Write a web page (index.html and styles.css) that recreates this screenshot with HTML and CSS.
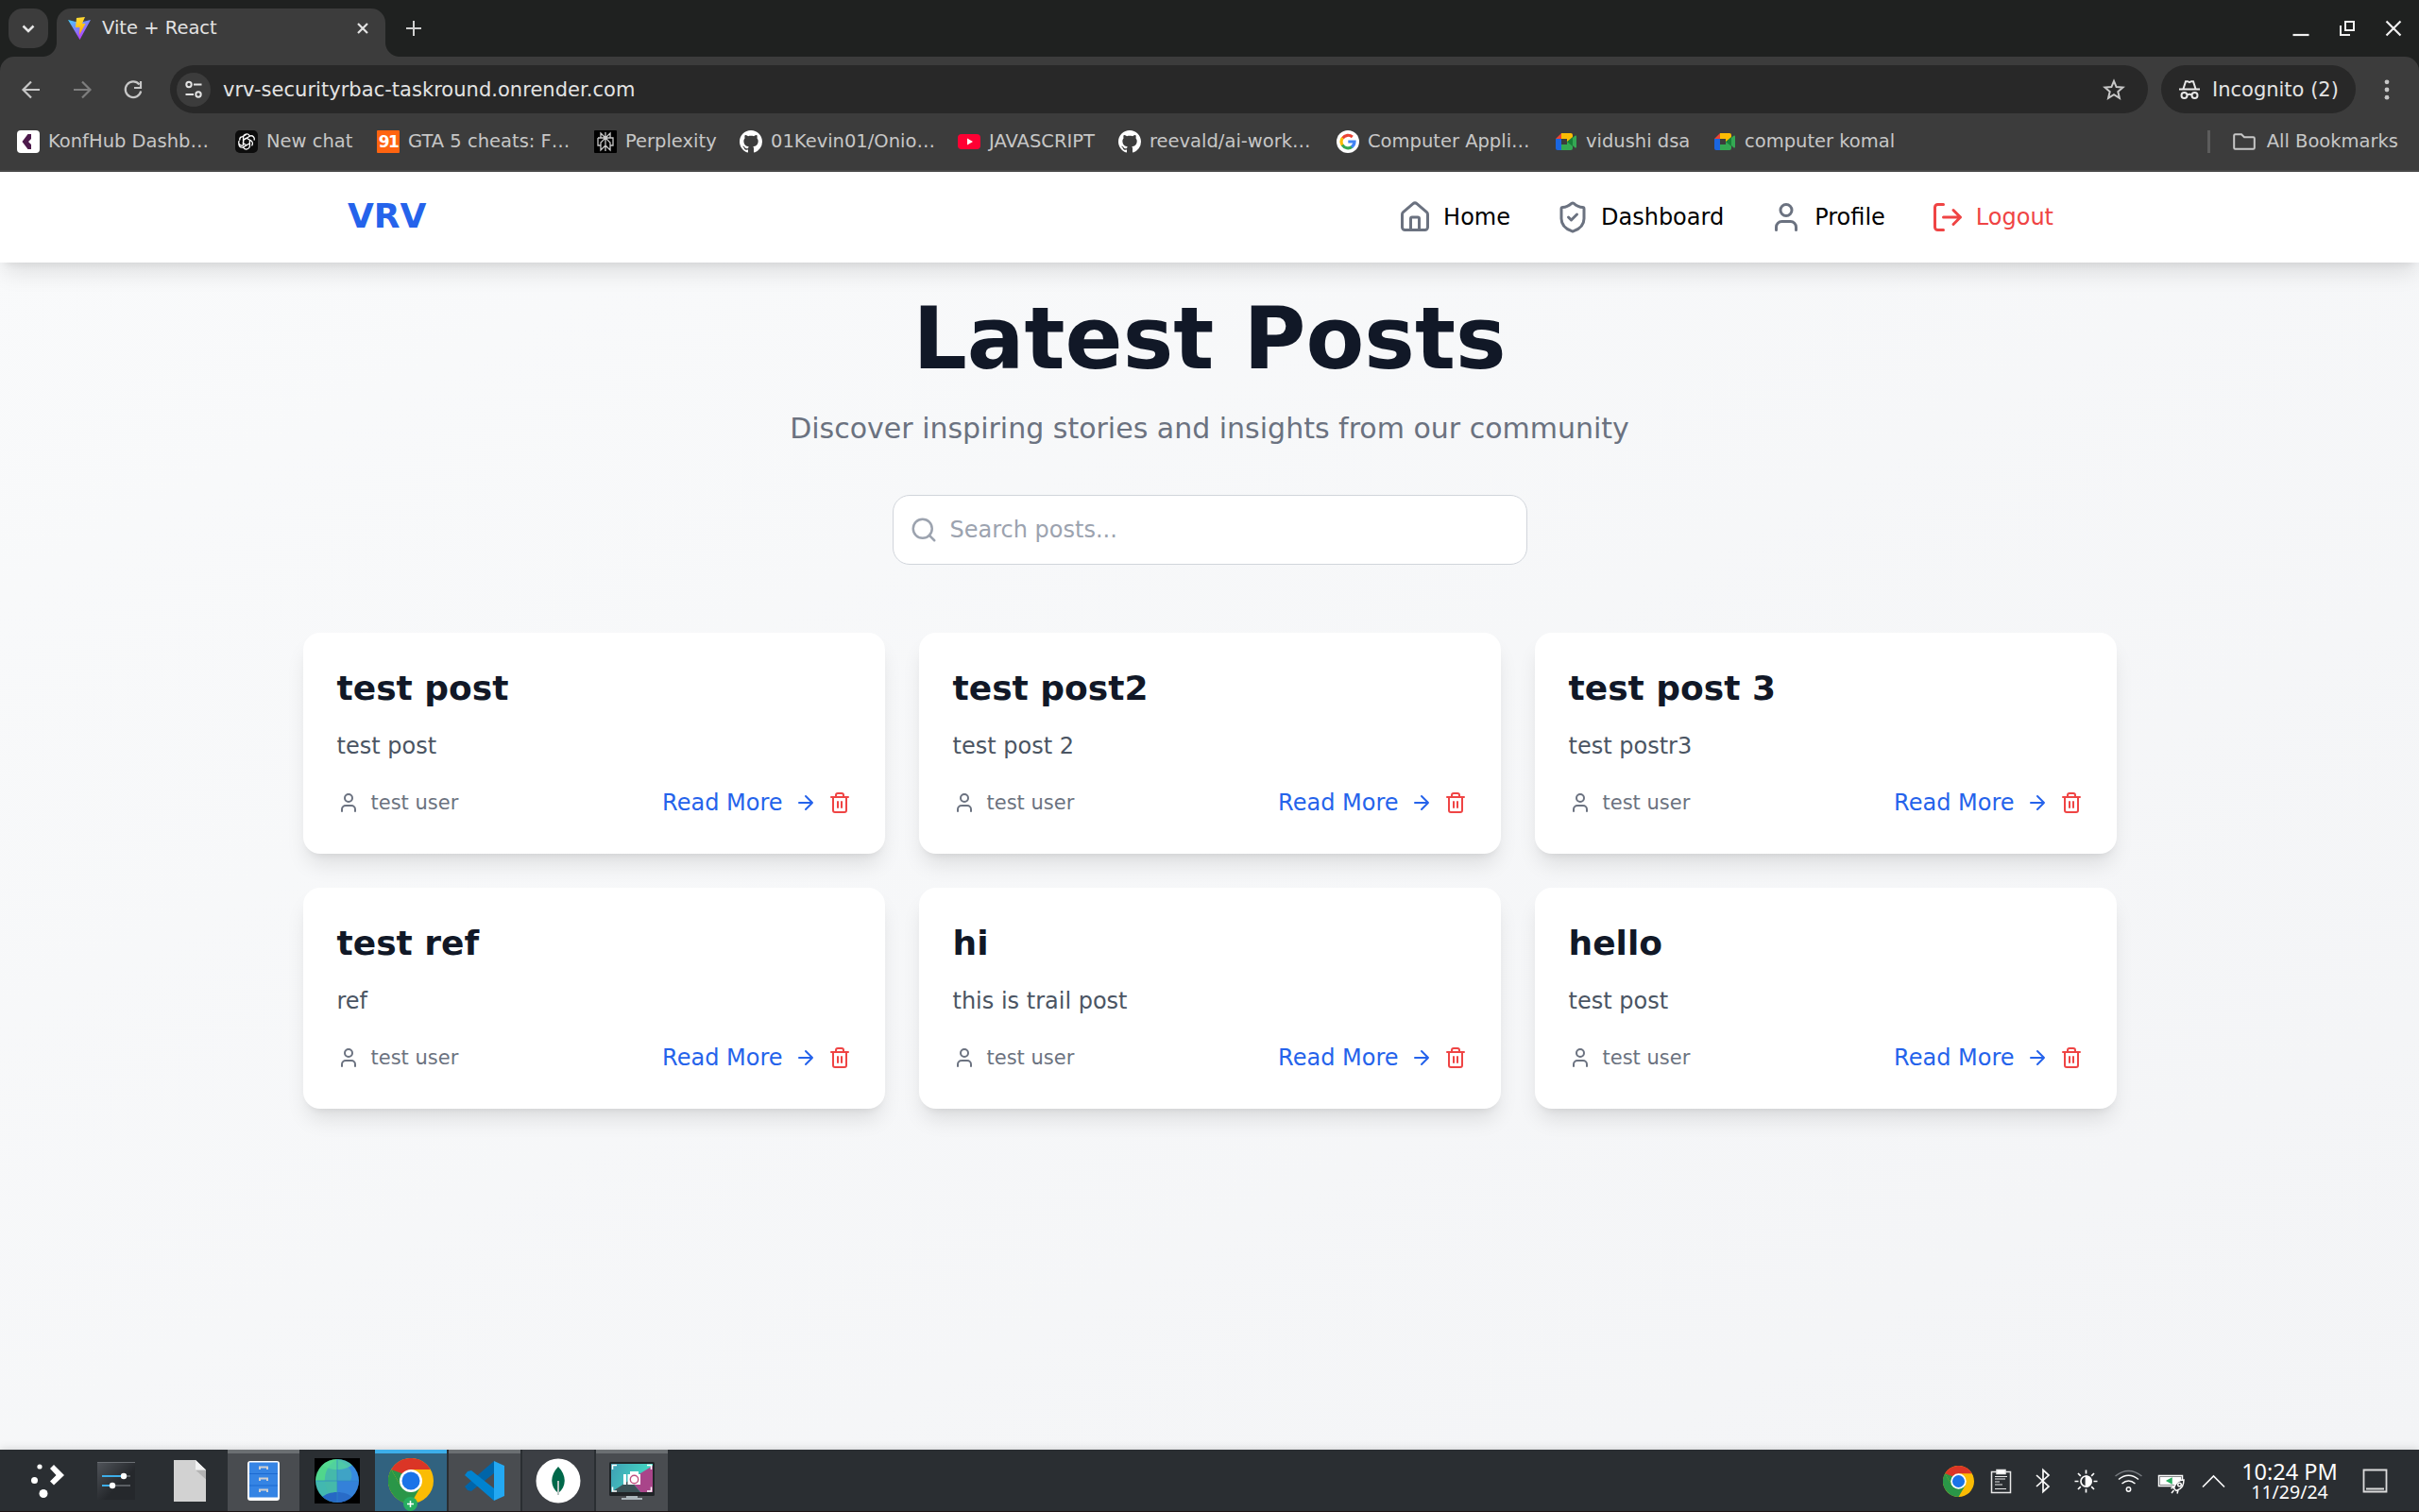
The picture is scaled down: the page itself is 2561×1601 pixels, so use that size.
FILE: index.html
```html
<!DOCTYPE html>
<html lang="en">
<head>
<meta charset="utf-8">
<title>Vite + React</title>
<link rel="stylesheet" href="styles.css">
</head>
<body>
<svg class="defs" width="0" height="0" aria-hidden="true">
  <defs>
    <linearGradient id="vite-a" x1="0" y1="0" x2=".6" y2="1"><stop offset="0" stop-color="#41d1ff"/><stop offset="1" stop-color="#bd34fe"/></linearGradient>
    <linearGradient id="vite-b" x1=".4" y1="0" x2=".6" y2="1"><stop offset="0" stop-color="#ffdd35"/><stop offset="1" stop-color="#ffa800"/></linearGradient>
    <clipPath id="globe-c"><circle cx="24" cy="24" r="23"/></clipPath>
    <linearGradient id="shot-g" x1="0" y1="0" x2="1" y2=".3"><stop offset="0" stop-color="#3f9fb5"/><stop offset="1" stop-color="#43dcc3"/></linearGradient>
    <linearGradient id="set-g" x1="0" y1="0" x2="1" y2="1"><stop offset="0" stop-color="#50545a"/><stop offset=".6" stop-color="#25282c"/></linearGradient>
  </defs>
  <symbol id="user" viewBox="0 0 24 24"><path d="M19 21v-2a4 4 0 0 0-4-4H9a4 4 0 0 0-4 4v2"/><circle cx="12" cy="7" r="4"/></symbol>
  <symbol id="arrow" viewBox="0 0 24 24"><path d="M5 12h14M12 5l7 7-7 7"/></symbol>
  <symbol id="trash" viewBox="0 0 24 24"><path d="M3 6h18M19 6v14c0 1-1 2-2 2H7c-1 0-2-1-2-2V6M8 6V4c0-1 1-2 2-2h4c1 0 2 1 2 2v2M10 11v6M14 11v6"/></symbol>
  <symbol id="github" viewBox="0 0 16 16"><path fill="#fff" d="M8 0C3.58 0 0 3.58 0 8c0 3.54 2.29 6.53 5.47 7.59.4.07.55-.17.55-.38 0-.19-.01-.82-.01-1.49-2.01.37-2.53-.49-2.69-.94-.09-.23-.48-.94-.82-1.13-.28-.15-.68-.52-.01-.53.63-.01 1.08.58 1.23.82.72 1.21 1.87.87 2.33.66.07-.52.28-.87.51-1.07-1.78-.2-3.64-.89-3.64-3.95 0-.87.31-1.59.82-2.15-.08-.2-.36-1.02.08-2.12 0 0 .67-.21 2.2.82.64-.18 1.32-.27 2-.27s1.36.09 2 .27c1.53-1.04 2.2-.82 2.2-.82.44 1.1.16 1.92.08 2.12.51.56.82 1.27.82 2.15 0 3.07-1.87 3.75-3.65 3.95.29.25.54.73.54 1.48 0 1.07-.01 1.93-.01 2.2 0 .21.15.46.55.38A8.01 8.01 0 0 0 16 8c0-4.42-3.58-8-8-8z"/></symbol>
  <symbol id="meet" viewBox="0 0 24 24"><path fill="#ea4335" d="M1 9l6-6v6z"/><path fill="#1a66e0" d="M1 9h6v12H3a2 2 0 0 1-2-2z"/><path fill="#fbbc04" d="M7 3h10a2 2 0 0 1 2 2v7h-6V9H7z"/><path fill="#34a853" d="M7 21v-6h6v-3h6v7a2 2 0 0 1-2 2z"/><path fill="#34a853" d="M15 12l6-6c1-1 2-.6 2 .5v11c0 1.100-1 1.500-2 .5z"/><path fill="#188038" d="M13 12l6-5v10z"/></symbol>
  <symbol id="chrome" viewBox="0 0 48 48"><circle cx="24" cy="24" r="24" fill="#fbbc04"/><path fill="#2a9648" d="M3.200 12A24 24 0 0 0 24 48L34.400 30 24 24 13.600 30z"/><path fill="#db3526" d="M3.200 12A24 24 0 0 1 44.800 12H24L13.600 18z"/><path fill="#2a9648" d="M3.200 12L13.600 30l6-12z"/><path fill="#db3526" d="M3.200 12L13.600 30A12 12 0 0 1 24 12z" opacity="0"/><circle cx="24" cy="24" r="12" fill="#fff"/><circle cx="24" cy="24" r="9.500" fill="#1a73e8"/></symbol>
</svg>

<header class="browser">
  <div class="tabstrip">
    <button class="tab-search"><svg width="14" height="9" viewBox="0 0 14 9"><path d="M1.500 1.500L7 7l5.500-5.500" fill="none" stroke="#e6e6e6" stroke-width="2.500"/></svg></button>
    <div class="tab">
      <svg width="24" height="24" viewBox="0 0 24 24"><path fill="url(#vite-a)" d="M0 3l12 3L24 3 12.500 24z"/><path fill="url(#vite-b)" d="M9 1l9-1-3 7h3.500L12 19l.5-8H8z"/></svg>
      <span>Vite + React</span>
      <svg class="close" width="12" height="12" viewBox="0 0 12 12"><path d="M1 1l10 10M11 1L1 11" stroke="#e3e3e3" stroke-width="2.200"/></svg>
    </div>
    <svg class="newtab" width="16" height="16" viewBox="0 0 16 16"><path d="M8 0v16M0 8h16" stroke="#d0d0d0" stroke-width="2"/></svg>
    <div class="window-controls">
      <svg width="18" height="18" viewBox="0 0 18 18"><path d="M.5 16h17" stroke="#f0f0f0" stroke-width="2.200"/></svg>
      <svg width="18" height="18" viewBox="0 0 18 18"><path d="M7 2h9v9H7zM2 6v10h10" fill="none" stroke="#f0f0f0" stroke-width="2"/></svg>
      <svg width="18" height="18" viewBox="0 0 18 18"><path d="M1.500 1.500l15 15M16.500 1.500l-15 15" stroke="#f0f0f0" stroke-width="2.200"/></svg>
    </div>
  </div>
  <div class="toolbar">
    <svg class="nav-btn" width="24" height="24" viewBox="0 0 24 24" fill="none" stroke="#c7c7c7" stroke-width="2.200"><path d="M21 12H4M12 3.500L3.500 12l8.500 8.500"/></svg>
    <svg class="nav-btn" width="24" height="24" viewBox="0 0 24 24" fill="none" stroke="#7e7e7e" stroke-width="2.200"><path d="M3 12h17M12 3.500l8.500 8.500-8.500 8.500"/></svg>
    <svg class="nav-btn" width="24" height="24" viewBox="0 0 24 24" fill="none" stroke="#c7c7c7" stroke-width="2.200"><path d="M18.500 6.500A8.300 8.300 0 1 0 20.200 13.500M20 3v7h-7"/></svg>
    <div class="omnibox">
      <span class="site"><svg width="20" height="20" viewBox="0 0 20 20" fill="none" stroke="#e3e3e3" stroke-width="2"><circle cx="5" cy="4.500" r="2.700"/><path d="M10 4.500h8.500M1.500 15h8.500"/><circle cx="15" cy="15" r="2.700"/></svg></span>
      <span class="url">vrv-securityrbac-taskround.onrender.com</span>
      <svg width="24" height="24" viewBox="0 0 24 24"><path d="M12 2.800l2.600 6.300 6.900.5-5.200 4.500 1.600 6.700L12 17.200l-5.900 3.600 1.600-6.700-5.200-4.500 6.900-.5z" fill="none" stroke="#c7c7c7" stroke-width="2"/></svg>
    </div>
    <div class="incognito">
      <svg width="22" height="22" viewBox="0 0 22 22" fill="none" stroke="#e8e8e8" stroke-width="2"><path d="M0 10.500h22M4.500 10L7 2.200h2l2 1 2-1h2l2.500 7.800"/><circle cx="5.500" cy="17" r="3"/><circle cx="16.500" cy="17" r="3"/><path d="M8.500 16.500q2.500-1.500 5 0"/></svg>
      <span>Incognito (2)</span>
    </div>
    <svg class="dots" width="6" height="24" viewBox="0 0 6 24" fill="#c7c7c7"><circle cx="3" cy="3.800" r="2.400"/><circle cx="3" cy="12" r="2.400"/><circle cx="3" cy="20.200" r="2.400"/></svg>
  </div>
  <div class="bookmarks">
    <a><svg viewBox="0 0 24 24"><rect width="24" height="24" rx="4" fill="#fff"/><path d="M11.500 4h3.500v5l-3 3 3 3v5h-3.500L5.500 12z" fill="#4d1a4b"/></svg><span>KonfHub Dashb…</span></a>
    <a><svg viewBox="0 0 24 24"><rect width="24" height="24" rx="5" fill="#0d0d0d"/><g fill="none" stroke="#fff" stroke-width="1.300"><path d="M12 8.200L8.600 10.200v5.500a3.300 3.300 0 0 1-4.300-4.700"/><path d="M8.600 12V7.200a3.600 3.600 0 0 1 6.600-1.600M8.600 10.200l3.400-2 4.300 2.500a3.600 3.600 0 0 1 1.200 5.600M12 8.200l4-2.300a3.400 3.400 0 0 1 4 4.600M15.400 10.200v6.700a3.600 3.600 0 0 1-6.600 1.500M15.400 13.800L12 15.800l-4.300-2.500M12 15.800l-4 2.300a3.400 3.400 0 0 1-4-4M12 4.300L7.800 6.600a3.600 3.600 0 0 0-3 4"/></g></svg><span>New chat</span></a>
    <a><b class="fav91">91</b><span>GTA 5 cheats: F…</span></a>
    <a><svg viewBox="0 0 24 24"><rect width="24" height="24" rx="1" fill="#000"/><path d="M12 2v20M7 3l5 5 5-5v5H7zM4 8h16v8h-3M4 8v8h3M12 8l-5 5v8l5-5 5 5v-8z" fill="none" stroke="#c8c8c8" stroke-width="1.300"/></svg><span>Perplexity</span></a>
    <a><svg viewBox="0 0 24 24"><use href="#github" width="24" height="24"/></svg><span>01Kevin01/Onio…</span></a>
    <a><svg viewBox="0 0 24 24"><rect y="4" width="24" height="16" rx="4" fill="#ff0033"/><path d="M10 8.500v7l6-3.500z" fill="#fff"/></svg><span>JAVASCRIPT</span></a>
    <a><svg viewBox="0 0 24 24"><use href="#github" width="24" height="24"/></svg><span>reevald/ai-work…</span></a>
    <a><svg viewBox="0 0 24 24"><circle cx="12" cy="12" r="12" fill="#fff"/><g fill="none" stroke-width="3.200"><path d="M6.400 8.300A7 7 0 0 1 16.800 7" stroke="#ea4335"/><path d="M6.400 8A7 7 0 0 0 6.400 16" stroke="#fbbc04"/><path d="M6.200 15.500A7 7 0 0 0 16.500 17.300" stroke="#34a853"/><path d="M16 17.700A7 7 0 0 0 19 12H12.300" stroke="#4285f4"/></g></svg><span>Computer Appli…</span></a>
    <a><svg viewBox="0 0 24 24"><use href="#meet" width="24" height="24"/></svg><span>vidushi dsa</span></a>
    <a><svg viewBox="0 0 24 24"><use href="#meet" width="24" height="24"/></svg><span>computer komal</span></a>
    <a class="all"><svg viewBox="0 0 24 24"><path d="M1.200 5.500v13q0 1.300 1.300 1.300h19q1.300 0 1.300-1.300V8.500q0-1.300-1.300-1.300H12L9 4.200H2.500q-1.300 0-1.300 1.300z" fill="none" stroke="#c7c7c7" stroke-width="2"/></svg><span>All Bookmarks</span></a>
  </div>
</header>

<div class="page">
  <nav class="navbar">
    <a class="brand">VRV</a>
    <div class="links">
      <a><svg viewBox="0 0 24 24"><path d="M15 21v-8a1 1 0 0 0-1-1h-4a1 1 0 0 0-1 1v8"/><path d="M3 10a2 2 0 0 1 .709-1.528l7-5.999a2 2 0 0 1 2.582 0l7 5.999A2 2 0 0 1 21 10v9a2 2 0 0 1-2 2H5a2 2 0 0 1-2-2z"/></svg>Home</a>
      <a><svg viewBox="0 0 24 24"><path d="M20 13c0 5-3.500 7.500-7.660 8.950a1 1 0 0 1-.67-.01C7.500 20.500 4 18 4 13V6a1 1 0 0 1 1-1c2 0 4.500-1.200 6.240-2.720a1.170 1.170 0 0 1 1.520 0C14.510 3.810 17 5 19 5a1 1 0 0 1 1 1z"/><path d="m9 12 2 2 4-4"/></svg>Dashboard</a>
      <a><svg><use href="#user"/></svg>Profile</a>
      <a class="logout"><svg viewBox="0 0 24 24"><path d="M9 21H5a2 2 0 0 1-2-2V5a2 2 0 0 1 2-2h4M16 17l5-5-5-5M21 12H9"/></svg>Logout</a>
    </div>
  </nav>
  <main>
    <h1>Latest Posts</h1>
    <p class="subtitle">Discover inspiring stories and insights from our community</p>
    <div class="search"><svg viewBox="0 0 24 24"><circle cx="11" cy="11" r="8"/><path d="m21 21-4.300-4.300"/></svg><span>Search posts...</span></div>
    <section class="posts">
      <article><h2>test post</h2><p>test post</p><footer><span class="author"><svg><use href="#user"/></svg>test user</span><a>Read More<svg><use href="#arrow"/></svg></a><svg class="del"><use href="#trash"/></svg></footer></article>
      <article><h2>test post2</h2><p>test post 2</p><footer><span class="author"><svg><use href="#user"/></svg>test user</span><a>Read More<svg><use href="#arrow"/></svg></a><svg class="del"><use href="#trash"/></svg></footer></article>
      <article><h2>test post 3</h2><p>test postr3</p><footer><span class="author"><svg><use href="#user"/></svg>test user</span><a>Read More<svg><use href="#arrow"/></svg></a><svg class="del"><use href="#trash"/></svg></footer></article>
      <article><h2>test ref</h2><p>ref</p><footer><span class="author"><svg><use href="#user"/></svg>test user</span><a>Read More<svg><use href="#arrow"/></svg></a><svg class="del"><use href="#trash"/></svg></footer></article>
      <article><h2>hi</h2><p>this is trail post</p><footer><span class="author"><svg><use href="#user"/></svg>test user</span><a>Read More<svg><use href="#arrow"/></svg></a><svg class="del"><use href="#trash"/></svg></footer></article>
      <article><h2>hello</h2><p>test post</p><footer><span class="author"><svg><use href="#user"/></svg>test user</span><a>Read More<svg><use href="#arrow"/></svg></a><svg class="del"><use href="#trash"/></svg></footer></article>
    </section>
  </main>
</div>

<div class="taskbar">
  <div class="apps">
    <span><svg viewBox="-6 0 48 48" fill="#fff"><circle cx="15" cy="9" r="2.600"/><circle cx="9.500" cy="23.500" r="3.500"/><circle cx="19" cy="37.500" r="4.500"/><path d="M26 11l4-4L41 18 30 28.500l-4-4L32.500 18z"/></svg></span>
    <span><svg viewBox="0 0 48 48"><rect x="4" y="4" width="40" height="40" fill="url(#set-g)"/><path d="M4 4.500h40" stroke="#6a6e73"/><path d="M9 19h22M9 29h10" stroke="#3daee9" stroke-width="2"/><path d="M33 19h6M21 29h18" stroke="#5a5e63" stroke-width="2"/><circle cx="32" cy="19" r="3.200" fill="#fff"/><circle cx="20" cy="29" r="3.200" fill="#fff"/></svg></span>
    <span><svg viewBox="0 0 48 48"><path d="M7 2h23l11 10.500V46H7z" fill="#d2d2d2"/><path d="M30 12.500h11v10z" fill="#b4b4b4"/><path d="M30 2v10.500h11z" fill="#f2f2f2"/></svg></span>
    <span class="open"><svg viewBox="0 0 48 48"><rect x="7" y="3" width="34" height="42" rx="3" fill="#fff"/><path d="M9 4.500h30v37H9z" fill="#3584e4"/><path d="M9 16.500h30M9 29h30" stroke="#1c6ad0" stroke-width="1"/><path d="M20 12v-2.500h8V12M20 24v-2.500h8V24M20 36v-2.500h8V36" fill="none" stroke="#d0cfd0" stroke-width="2"/></svg></span>
    <span><svg viewBox="0 0 48 48"><path d="M0 0h48v48H0z" fill="#000"/><g clip-path="url(#globe-c)"><path d="M0 0h24v24H0z" fill="#50d68c"/><path d="M0 24h24v24H0z" fill="#42b8b0"/><path d="M24 0h24v48H24z" fill="#378be0"/><path d="M24 1C5 12 8 36 24 47z" fill="#45b9aa"/><path d="M24 1c14 8 18 14 14 23H24z" fill="#3fa3c6"/><path d="M7 6c8 8 26 8 34 0V0H7z" fill="#57dd96" opacity=".65"/><path d="M7 42c8-8 26-8 34 0v6H7z" fill="#2668c4"/><path d="M24 24h24v24H24z" fill="#2f74d0" opacity=".4"/><path d="M24 0v48M0 24h48" stroke="#2f86c4" stroke-width=".7"/></g></svg></span>
    <span class="active"><svg viewBox="0 0 48 48"><use href="#chrome" width="48" height="48"/></svg><svg class="plus" viewBox="0 0 15 15"><circle cx="7.500" cy="7.500" r="7.500" fill="#27ae60"/><path d="M7.500 4v7M4 7.500h7" stroke="#fff" stroke-width="1.500"/></svg></span>
    <span class="open"><svg viewBox="0 0 48 48"><path d="M34 3L3 30l3 4 4 1 24-19z" fill="#0065a9"/><path d="M34 45L3 18l3-4 4-1 24 19z" fill="#0083d0"/><path d="M34 3l11 5v32l-11 5z" fill="#23a8f2"/></svg></span>
    <span class="idle"><svg viewBox="0 0 48 48"><circle cx="24" cy="24" r="23.500" fill="#fff"/><path d="M24 9c9 9 9 21 0 28-9-7-9-19 0-28z" fill="#00684a"/><path d="M24 24v15" stroke="#b8c4c2" stroke-width="2"/></svg></span>
    <span class="open"><svg viewBox="0 0 48 48"><rect x="0" y="4" width="48" height="36" rx="1.500" fill="#202427"/><path d="M2 6h44v30H2z" fill="url(#shot-g)"/><path d="M46 8v28H33L22 23z" fill="#a9458a"/><path d="M22 23L2 36h31z" fill="#3c5357"/><path d="M3.500 12V7.500H8M40 7.500h4.500V12M3.500 30.500V35H8M40 35h4.500v-4.500" fill="none" stroke="#fff" stroke-width="1.500"/><path d="M15 17h3v11h-3zM19.500 17H33v11H19.500zM22 14h9v3h-9z" fill="#fff"/><circle cx="26.500" cy="22.500" r="4.200" fill="#fff" stroke="#c0507f" stroke-width="1.400"/><path d="M18 40h12v2h5v2H13v-2h5z" fill="#aab5ba"/></svg></span>
  </div>
  <div class="tray">
    <svg viewBox="0 0 33 33"><use href="#chrome" width="33" height="33"/></svg>
    <svg viewBox="0 0 33 33" fill="none" stroke="#e8e8e8" stroke-width="1.500"><path d="M6.500 6.500h20v22h-20z"/><path d="M12 4.500h9v4h-9z" fill="#fff"/><path d="M10 11.500h13M10 14h11M10 17h5M10 20h8M10 24.500h12" stroke-width="1.200"/></svg>
    <svg viewBox="0 0 33 33" fill="none" stroke="#fcfcfc" stroke-width="1.700"><path d="M9 10l13 12-6 5.500v-23L22 10 9 22"/></svg>
    <svg viewBox="0 0 33 33" fill="none" stroke="#fcfcfc" stroke-width="1.700"><circle cx="16.500" cy="16.500" r="5.500"/><path d="M16.500 11a5.500 5.500 0 0 1 0 11z" fill="#fff"/><path d="M16.500 4.500v4M16.500 24.500v4M4.500 16.500h4M24.500 16.500h4M8 8l2.800 2.800M22.200 22.200L25 25M25 8l-2.800 2.800M10.800 22.200L8 25"/></svg>
    <svg viewBox="0 0 33 33" fill="none" stroke="#fcfcfc" stroke-width="1.500"><circle cx="16.500" cy="25" r="2.200"/><path d="M9.500 19q7-6 14 0M6 14.500q10.500-8.500 21 0"/><path d="M2.500 11q14-11 28 0" stroke="#777b80"/></svg>
    <svg viewBox="0 0 33 33" fill="none" stroke="#fcfcfc" stroke-width="1.500"><path d="M3.500 10.500h25v11h-25z"/><path d="M5.500 12.500h21v7h-21z" fill="#fff"/><path d="M12.500 16l4.500-2.500v5z" fill="#27ae60" stroke="#27ae60"/><path d="M30 15c-6 0-9 4-10.500 9l2.500 2.500c5-1.500 8-5 8-11.500z" fill="#2a2e32"/><circle cx="25.500" cy="20" r="1.800"/><path d="M20 22l-3.500 2M24 26l-1 3.500M19.500 26L17 29"/></svg>
    <svg viewBox="0 0 33 33" fill="none" stroke="#fcfcfc" stroke-width="1.600"><path d="M5 22.500l11.500-11.500L28 22.500"/></svg>
    <div class="clock"><div>10:24 PM</div><div class="date">11/29/24</div></div>
    <svg viewBox="0 0 33 33" fill="none" stroke="#dcdcdc" stroke-width="1.800"><path d="M4.500 4.500h24v23h-24zM7 24.500h19"/></svg>
  </div>
</div>
</body>
</html>
```
FILE: styles.css
```css
* { box-sizing: border-box; }
body { margin: 0; width: 2561px; height: 1601px; overflow: hidden; display: flex; flex-direction: column; font-family: "DejaVu Sans", sans-serif; font-size: 24px; line-height: 36px; }
svg { flex: none; display: block; }
.defs { position: absolute; }
h1, h2, p { margin: 0; }

.browser { height: 182px; background: #1f2120; color: #e3e3e3; border-bottom: 2px solid #484848; white-space: nowrap; }
.tabstrip { height: 60px; display: flex; align-items: flex-start; padding: 9px 18px 0 9px; }
.tab-search { width: 42px; height: 42px; border: 0; padding: 0; border-radius: 15px; background: #3c3c3c; display: grid; place-items: center; }
.tab { position: relative; width: 348px; height: 51px; margin-left: 9px; padding: 0 18px 9px 12px; background: #3c3c3c; border-radius: 15px 15px 0 0; display: flex; align-items: center; gap: 12px; font-size: 19.500px; line-height: 24px; }
.tab::before, .tab::after { content: ""; position: absolute; bottom: 0; width: 15px; height: 15px; }
.tab::before { left: -15px; background: radial-gradient(circle at 0 0, transparent 14.500px, #3c3c3c 15.500px); }
.tab::after { right: -15px; background: radial-gradient(circle at 100% 0, transparent 14.500px, #3c3c3c 15.500px); }
.tab .close { margin-left: auto; }
.newtab { margin: 13px 0 0 22px; }
.window-controls { margin: 12px 0 0 auto; display: flex; gap: 31px; }
.toolbar { height: 69px; background: #3c3c3c; border-radius: 15px 15px 0 0; display: flex; align-items: center; padding: 0 31px 0 21px; font-size: 21px; }
.nav-btn { margin-right: 30px; }
.nav-btn + .nav-btn + .nav-btn { margin-right: 27px; }
.omnibox { width: 2094px; height: 51px; border-radius: 26px; background: #282828; display: flex; align-items: center; padding: 0 24px 0 7px; }
.site { width: 36px; height: 36px; border-radius: 50%; background: #3c3c3c; display: grid; place-items: center; margin-right: 13px; }
.url { flex: 1; letter-spacing: .03px; }
.incognito { width: 206px; height: 51px; margin-left: 14px; border-radius: 26px; background: #282828; display: flex; align-items: center; padding-left: 19px; gap: 13px; }
.dots { margin-left: auto; }
.bookmarks { height: 51px; background: #3c3c3c; padding: 0 22px 9px 18px; display: grid; grid-template-columns: 231px 150px 230px 154px 231px 170px 231px 231px 168px 1fr auto; align-items: center; font-size: 19.500px; line-height: 24px; color: #c7c7c7; }
.bookmarks a { display: flex; align-items: center; gap: 9px; }
.bookmarks span { padding-bottom: 1px; }
.bookmarks svg { width: 24px; height: 24px; }
.bookmarks .all { border-left: 3px solid #5c5c5c; padding-left: 24px; gap: 12px; height: 24px; }
.fav91 { width: 24px; height: 24px; border-radius: 1px; background: #ff6410; color: #fff; font-size: 17px; letter-spacing: -1.500px; text-align: center; }

.page { flex: 1; background: linear-gradient(to bottom right, #f9fafb, #f3f4f6); }
.navbar { height: 96px; background: #fff; padding: 0 387px 0 368px; display: flex; align-items: center; justify-content: space-between; box-shadow: 0 15px 22px -4px rgba(0,0,0,.1), 0 6px 9px -6px rgba(0,0,0,.1); }
.brand { font-size: 36px; font-weight: bold; color: #2563eb; padding-bottom: 3px; }
.links { display: flex; gap: 48px; color: #000; }
.links a { display: flex; align-items: center; gap: 12px; }
.links svg { width: 36px; height: 36px; color: #6b7280; }
.links .logout, .logout svg { color: #ef4444; }
.page svg { fill: none; stroke: currentColor; stroke-width: 2; stroke-linecap: round; stroke-linejoin: round; }
main { width: 1920px; margin: 0 auto; padding-top: 36px; display: flex; flex-direction: column; align-items: center; }
h1 { font-size: 90px; line-height: 90px; color: #111827; }
.subtitle { margin-top: 29px; font-size: 30px; line-height: 42px; color: #6b7280; }
.search { width: 672px; height: 74px; margin: 49px 0 72px; border: 1px solid #d1d5db; border-radius: 18px; background: #fff; display: flex; align-items: center; padding: 0 17px; gap: 13px; color: #9ca3af; }
.search svg { width: 30px; height: 30px; }
.posts { width: 100%; display: grid; grid-template-columns: repeat(3, 1fr); gap: 36px; }
article { height: 234px; padding: 35px 36px 36px; border-radius: 18px; background: #fff; box-shadow: 0 15px 22px -4px rgba(0,0,0,.1), 0 6px 9px -6px rgba(0,0,0,.1); }
article h2 { font-size: 36px; line-height: 48px; color: #111827; margin-bottom: 19px; }
article p { color: #4b5563; margin-bottom: 24px; }
article svg { width: 24px; height: 24px; }
article footer { display: flex; align-items: center; gap: 12px; }
.author { flex: 1; display: flex; align-items: center; gap: 12px; font-size: 21px; color: #6b7280; }
article a { display: flex; align-items: center; gap: 12px; color: #2563eb; }
.del { color: #ef4444; }

.taskbar { position: relative; height: 66px; background: #2a2e32; border-bottom: 1px solid #1c1214; box-shadow: 0 0 9px rgba(0,0,0,.16); display: flex; justify-content: space-between; color: #fcfcfc; }
.apps { display: flex; padding-left: 7px; }
.apps span { position: relative; width: 76px; margin-right: 2px; display: grid; place-items: center; }
.apps svg { width: 48px; height: 48px; }
.apps .open { background: #494c50; border-top: 4px solid #6b6f72; padding-bottom: 4px; }
.apps .idle { background: #3c3f44; }
.apps .active { background: #31627f; border-top: 4px solid #3daee9; padding-bottom: 4px; }
.apps .plus { position: absolute; left: 30px; top: 46px; width: 15px; height: 15px; }
.tray { display: flex; align-items: center; gap: 12px; padding: 2px 30px 0 0; }
.tray svg { width: 33px; height: 33px; }
.clock { width: 102px; margin: 0 11px 2px 1px; text-align: center; font: 23.500px/24px "Noto Sans", sans-serif; white-space: nowrap; }
.clock .date { font-size: 19.500px; line-height: 20px; }
```
